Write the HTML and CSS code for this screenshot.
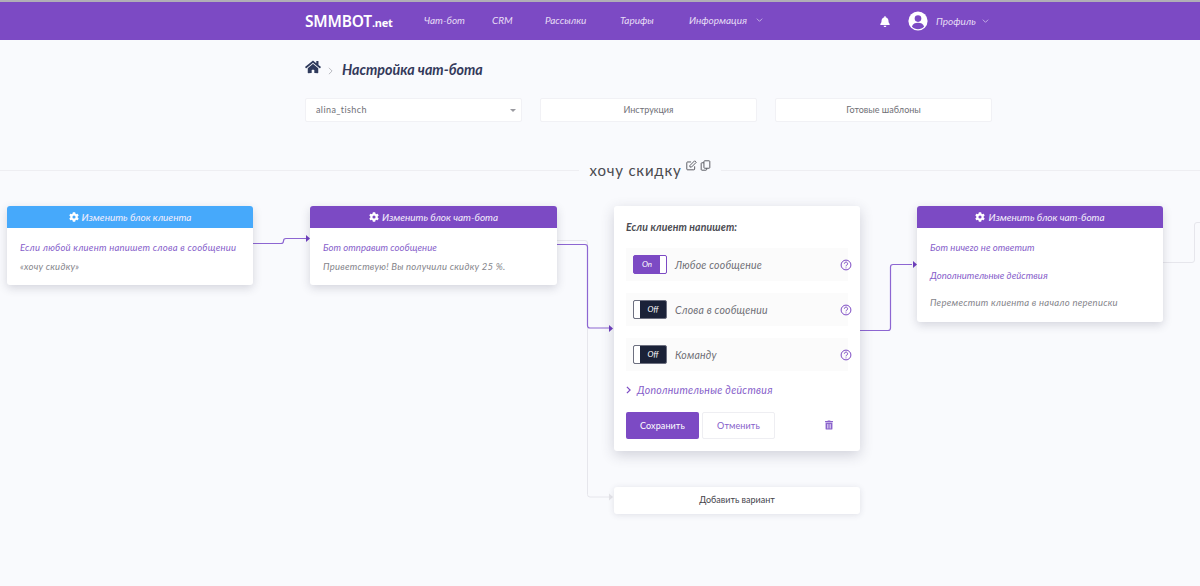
FILE: index.html
```html
<!DOCTYPE html>
<html>
<head>
    <title>SMMBOT.net</title>
    <link rel="stylesheet" href="styles.css">
</head>
<body>
    <header class="topbar">
        <div class="topbar-inner">
            <a class="logo">SMMBOT<span class="logo-net">.net</span></a>
            <nav class="nav">
                <a class="nav-chat">Чат-бот</a>
                <a class="nav-crm">CRM</a>
                <a class="nav-mail">Рассылки</a>
                <a class="nav-price">Тарифы</a>
                <a class="nav-info">Информация
                    <svg class="chev" viewBox="0 0 10 6"><path d="M1 1l4 4 4-4"/></svg>
                </a>
            </nav>
            <svg class="bell" viewBox="0 0 448 512"><path d="M224 512c35 0 64-29 64-64H160c0 35 29 64 64 64zm215-150c-19-21-55-52-55-154 0-78-54-140-128-155V32a32 32 0 0 0-64 0v21C118 68 64 130 64 208c0 102-36 133-55 154-6 6-9 14-9 22 0 16 13 32 32 32h384c19 0 32-16 32-32 0-8-3-16-9-22z"/></svg>
            <svg class="avatar" viewBox="0 0 20 20">
                <circle cx="10" cy="10" r="9.6" fill="#fff"/>
                <circle cx="10" cy="7.6" r="3.3" fill="#7c4ac4"/>
                <path d="M3.9 15.4c1-2.6 3.2-3.7 6.1-3.7s5.100 1.100 6.100 3.700c-1.500 1.700-3.700 2.800-6.100 2.800s-4.600-1.100-6.100-2.800z" fill="#7c4ac4"/>
            </svg>
            <a class="profile">Профиль
                <svg class="chev" viewBox="0 0 10 6"><path d="M1 1l4 4 4-4"/></svg>
            </a>
        </div>
    </header>

    <main class="page">
        <div class="crumbs">
            <svg class="home" viewBox="0 0 576 512"><path d="M280 148L96 300v164c0 9 7 16 16 16l112-.3c9 0 16-7 16-16V368c0-9 7-16 16-16h64c9 0 16 7 16 16v95.600c0 9 7 16 16 16l112 .4c9 0 16-7 16-16V300L296 148c-4-4-12-4-16 0zM572 251l-84-69V44c0-7-5-12-12-12h-56c-7 0-12 5-12 12v72l-90-74c-18-15-43-15-61 0L4 251c-5 4-6 12-2 17l26 31c4 5 12 6 17 2L280 107c4-4 12-4 16 0l235 194c5 4 13 3 17-2l26-31c4-5 3-13-2-17z"/></svg>
            <svg class="crumb-sep" viewBox="0 0 6 10"><path d="M1 1l4 4-4 4"/></svg>
            <h1>Настройка чат-бота</h1>
        </div>
        <div class="tools">
            <div class="tool tool-select">alina_tishch<span class="caret"></span></div>
            <div class="tool">Инструкция</div>
            <div class="tool">Готовые шаблоны</div>
        </div>
    </main>

    <div class="scenario">
        <span class="scenario-name">хочу скидку</span>
        <span class="scenario-icons">
            <svg viewBox="0 0 14 14"><path d="M11 8v3.500a1 1 0 0 1-1 1H2a1 1 0 0 1-1-1v-8a1 1 0 0 1 1-1h4.500"/><path d="M5 7l6-6 2 2-6 6H5z"/></svg>
            <svg viewBox="0 0 14 14"><rect x="5" y="1" width="7.500" height="9.500" rx="1"/><path d="M5 3.500H2.500a1 1 0 0 0-1 1v7.500a1 1 0 0 0 1 1h5a1 1 0 0 0 1-1v-1.500"/></svg>
        </span>
    </div>

    <section class="canvas">
        <!-- connectors between blocks, coordinates are the same as the canvas -->
        <svg class="links" viewBox="0 0 1200 586">
            <path class="link-idle" d="M557 240.500h28q2.500 0 2.500 2.500v251.500q0 2.500 2.500 2.500h19"/>
            <path class="link-idle" d="M1163 262.500h29q2.500 0 2.500-2.500v-35q0-2.500 2.500-2.500h3"/>
            <path class="link" d="M253 243.500h28q2.500 0 2.500-2.500t2.500-2.500h21"/>
            <path class="link" d="M557 244.500h28q2.500 0 2.500 2.500v78.500q0 2.500 2.500 2.500h19"/>
            <path class="link" d="M860 330.500h28q2.500 0 2.500-2.500v-61q0-2.500 2.500-2.500h19"/>
            <path class="arrow-idle" d="M609 493.500l4 3.500-4 3.500z"/>
            <path class="arrow" d="M306 235l4 3.500-4 3.500z"/>
            <path class="arrow" d="M609 325l4 3.500-4 3.500z"/>
            <path class="arrow" d="M913 261l4 3.500-4 3.500z"/>
        </svg>

        <article class="block block-client">
            <div class="block-head head-client">
                <svg class="gear" viewBox="0 0 512 512"><path d="M487 316l-42-25a190 190 0 0 0 0-70l42-25c5-3 7-8 5-14-11-35-30-67-54-93-4-4-10-5-15-2l-42 25a187 187 0 0 0-61-35V28c0-6-4-11-9-12a195 195 0 0 0-110 0c-5 1-9 6-9 12v49a189 189 0 0 0-61 35L89 88c-5-3-11-2-15 2-24 26-43 58-54 93-2 6 0 11 5 14l42 25a190 190 0 0 0 0 70l-42 25c-5 3-7 8-5 14 11 35 30 67 54 93 4 4 10 5 15 2l42-25a187 187 0 0 0 61 35v49c0 6 4 11 9 12a195 195 0 0 0 110 0c5-1 9-6 9-12v-49a189 189 0 0 0 61-35l42 25c5 3 11 2 15-2 24-26 43-58 54-93 2-6 0-11-5-14zM256 336a80 80 0 1 1 0-160 80 80 0 0 1 0 160z"/></svg>
                Изменить блок клиента
            </div>
            <div class="block-body">
                <p class="line-link">Если любой клиент напишет слова в сообщении</p>
                <p class="line-muted">«хочу скидку»</p>
            </div>
        </article>

        <article class="block block-send">
            <div class="block-head">
                <svg class="gear" viewBox="0 0 512 512"><path d="M487 316l-42-25a190 190 0 0 0 0-70l42-25c5-3 7-8 5-14-11-35-30-67-54-93-4-4-10-5-15-2l-42 25a187 187 0 0 0-61-35V28c0-6-4-11-9-12a195 195 0 0 0-110 0c-5 1-9 6-9 12v49a189 189 0 0 0-61 35L89 88c-5-3-11-2-15 2-24 26-43 58-54 93-2 6 0 11 5 14l42 25a190 190 0 0 0 0 70l-42 25c-5 3-7 8-5 14 11 35 30 67 54 93 4 4 10 5 15 2l42-25a187 187 0 0 0 61 35v49c0 6 4 11 9 12a195 195 0 0 0 110 0c5-1 9-6 9-12v-49a189 189 0 0 0 61-35l42 25c5 3 11 2 15-2 24-26 43-58 54-93 2-6 0-11-5-14zM256 336a80 80 0 1 1 0-160 80 80 0 0 1 0 160z"/></svg>
                Изменить блок чат-бота
            </div>
            <div class="block-body">
                <p class="line-link">Бот отправит сообщение</p>
                <p class="line-muted">Приветствую! Вы получили скидку 25 %.</p>
            </div>
        </article>

        <article class="block block-edit">
            <h2>Если клиент напишет:</h2>
            <div class="option">
                <span class="switch switch-on"><span class="switch-text">On</span><span class="knob"></span></span>
                <span class="option-name">Любое сообщение</span>
                <svg class="help" viewBox="0 0 12 12"><circle cx="6" cy="6" r="4.900"/><path d="M4.400 4.700a1.600 1.600 0 1 1 2.500 1.300c-.6.400-.9.700-.9 1.300"/><path d="M6 8.500v.8"/></svg>
            </div>
            <div class="option">
                <span class="switch"><span class="knob"></span><span class="switch-text">Off</span></span>
                <span class="option-name">Слова в сообщении</span>
                <svg class="help" viewBox="0 0 12 12"><circle cx="6" cy="6" r="4.900"/><path d="M4.400 4.700a1.600 1.600 0 1 1 2.500 1.300c-.6.400-.9.700-.9 1.300"/><path d="M6 8.500v.8"/></svg>
            </div>
            <div class="option">
                <span class="switch"><span class="knob"></span><span class="switch-text">Off</span></span>
                <span class="option-name">Команду</span>
                <svg class="help" viewBox="0 0 12 12"><circle cx="6" cy="6" r="4.900"/><path d="M4.400 4.700a1.600 1.600 0 1 1 2.500 1.300c-.6.400-.9.700-.9 1.300"/><path d="M6 8.500v.8"/></svg>
            </div>
            <a class="more">
                <svg viewBox="0 0 6 10"><path d="M1 1l4 4-4 4"/></svg>
                Дополнительные действия
            </a>
            <div class="actions">
                <button class="btn btn-save">Сохранить</button>
                <button class="btn btn-cancel">Отменить</button>
                <svg class="trash" viewBox="0 0 448 512"><path d="M32 464a48 48 0 0 0 48 48h288a48 48 0 0 0 48-48V128H32zm272-256a16 16 0 0 1 32 0v224a16 16 0 0 1-32 0zm-96 0a16 16 0 0 1 32 0v224a16 16 0 0 1-32 0zm-96 0a16 16 0 0 1 32 0v224a16 16 0 0 1-32 0zM432 32H312l-9-19a24 24 0 0 0-22-13H167a24 24 0 0 0-21 13l-9 19H16A16 16 0 0 0 0 48v32a16 16 0 0 0 16 16h416a16 16 0 0 0 16-16V48a16 16 0 0 0-16-16z"/></svg>
            </div>
        </article>

        <article class="block block-add">Добавить вариант</article>

        <article class="block block-none">
            <div class="block-head">
                <svg class="gear" viewBox="0 0 512 512"><path d="M487 316l-42-25a190 190 0 0 0 0-70l42-25c5-3 7-8 5-14-11-35-30-67-54-93-4-4-10-5-15-2l-42 25a187 187 0 0 0-61-35V28c0-6-4-11-9-12a195 195 0 0 0-110 0c-5 1-9 6-9 12v49a189 189 0 0 0-61 35L89 88c-5-3-11-2-15 2-24 26-43 58-54 93-2 6 0 11 5 14l42 25a190 190 0 0 0 0 70l-42 25c-5 3-7 8-5 14 11 35 30 67 54 93 4 4 10 5 15 2l42-25a187 187 0 0 0 61 35v49c0 6 4 11 9 12a195 195 0 0 0 110 0c5-1 9-6 9-12v-49a189 189 0 0 0 61-35l42 25c5 3 11 2 15-2 24-26 43-58 54-93 2-6 0-11-5-14zM256 336a80 80 0 1 1 0-160 80 80 0 0 1 0 160z"/></svg>
                Изменить блок чат-бота
            </div>
            <div class="block-body body-tall">
                <p class="line-link">Бот ничего не ответит</p>
                <p class="line-link">Дополнительные действия</p>
                <p class="line-muted">Переместит клиента в начало переписки</p>
            </div>
        </article>
    </section>
</body>
</html>
```

FILE: styles.css
```css
:root {
    --purple: #7c4ac4;
    --blue: #46a9fb;
    --bg: #f9fafd;
    --dark: #1b2238;
    --text: #6f6f76;
    --line: #eeeef2;
}
html, body { height: 100%; }
body { margin: 0; background: var(--bg); color: var(--text); font-family: 'Lato', 'Noto Sans', sans-serif; font-size: 9.500px; font-style: italic; overflow: hidden; }
p, h1, h2 { margin: 0; white-space: nowrap; }
a { display: block; }
svg { display: block; flex: none; }

.topbar { height: 38px; background: var(--purple); border-top: 2px solid #b0aeb6; color: #e6dcf5; font-size: 10px; }
.topbar-inner { height: 100%; margin-left: 305px; width: 690px; display: flex; align-items: center; }
.logo { color: #fff; font-family: 'Noto Sans', sans-serif; font-size: 15.500px; font-weight: 600; font-style: normal; width: 119px; letter-spacing: -0.2px; }
.logo-net { font-size: 11px; font-weight: 700; }
.nav { display: flex; align-items: center; width: 456px; margin-top: -2px; }
.nav a { display: flex; align-items: center; }
.nav-chat { width: 68px; }
.nav-crm { width: 53px; }
.nav-mail { width: 75px; }
.nav-price { width: 69px; }
.chev { width: 7px; height: 4px; fill: none; stroke: #e6dcf5; stroke-width: 1; margin-left: 9px; }
.bell { width: 10px; height: 11px; fill: #fff; margin-right: 18px; }
.avatar { width: 20px; height: 20px; margin-right: 8px; }
.profile { display: flex; align-items: center; }
.profile .chev { margin-left: 6px; }

.page { margin-left: 305px; width: 687px; }
.crumbs { display: flex; align-items: center; height: 32px; margin-top: 13px; }
.home { width: 16px; height: 14px; fill: #2f3a5c; margin-top: -4px; }
.crumb-sep { width: 5px; height: 8px; fill: none; stroke: #a9abb3; stroke-width: 1; margin: 3px 9px 0 7px; }
h1 { font-size: 14.300px; font-weight: 700; color: #33395a; }
.tools { display: flex; justify-content: space-between; margin-top: 13px; }
.tool { width: 217px; height: 24px; box-sizing: border-box; line-height: 22px; background: #fff; border: 1px solid #f1f1f5; border-radius: 2px; text-align: center; font-size: 9px; font-style: normal; position: relative; }
.tool-select { text-align: left; padding-left: 10px; letter-spacing: 0.4px; }
.caret { position: absolute; right: 5px; top: 10px; border: 3px solid transparent; border-top-color: #9a9aa0; border-bottom: 0; }

.scenario { display: flex; align-items: flex-start; justify-content: center; height: 24px; margin-top: 36px; padding-left: 100px; position: relative; }
.scenario::before { content: ""; position: absolute; left: 0; right: 0; top: 12px; height: 1px; background: var(--line); }
.scenario-name { position: relative; z-index: 1; background: var(--bg); padding: 0 0 0 10px; font-size: 15px; line-height: 24px; font-style: normal; letter-spacing: 0.8px; color: #4a4a50; }
.scenario-icons { position: relative; z-index: 1; background: var(--bg); display: flex; gap: 3px; padding: 2px 10px 0 4px; height: 22px; }
.scenario-icons svg { width: 11px; height: 11px; fill: none; stroke: #55565e; stroke-width: 1.200; }

.canvas { position: absolute; left: 0; top: 0; width: 1200px; height: 586px; }
.links { position: absolute; left: 0; top: 0; width: 1200px; height: 586px; }
.link { fill: none; stroke: #8d66d2; stroke-width: 1.200; }
.link-idle { fill: none; stroke: #e6e6ec; stroke-width: 1; }
.arrow { fill: #6f3fc0; }
.arrow-idle { fill: #e3e3e8; }

/* blocks sit on the free canvas */
.block { position: absolute; top: 206px; width: 246px; box-sizing: border-box; background: #fff; border-radius: 3px; box-shadow: 0 3px 10px #2b2b4a2e; }
.block-client { left: 7px; height: 79px; }
.block-send { left: 310px; width: 247px; height: 79px; }
.block-none { left: 917px; height: 116px; }
.block-edit { left: 614px; height: 245px; padding: 14px 12px 0; box-shadow: 0 4px 14px #2b2b4a33; }
.block-add { left: 614px; top: 487px; height: 27px; line-height: 26px; text-align: center; font-size: 9px; font-style: normal; color: #44444c; box-shadow: 0 1px 6px #2b2b4a1f; }

.block-head { height: 22px; display: flex; align-items: center; justify-content: center; gap: 3px; background: var(--purple); color: #f3eefb; font-size: 10px; border-radius: 3px 3px 0 0; }
.head-client { background: var(--blue); }
.gear { width: 10px; height: 10px; fill: #fff; }
.block-body { padding: 13px 13px 0; display: flex; flex-direction: column; gap: 5px; line-height: 14px; }
.body-tall { gap: 13.500px; }
.line-link { color: #8660ca; letter-spacing: 0.05px; }
.block-client .line-link { letter-spacing: 0.25px; }
.line-muted { color: #85858b; letter-spacing: 0.25px; }

h2 { font-size: 10.500px; font-weight: 700; color: #4b4b52; line-height: 14px; letter-spacing: 0.1px; margin-bottom: 14px; }
.option { height: 33px; display: flex; align-items: center; background: #fbfbfb; padding-left: 7px; margin-bottom: 12px; position: relative; }
.switch { width: 34px; height: 19px; box-sizing: border-box; display: flex; align-items: stretch; background: var(--dark); border: 1px solid #6d7080; border-radius: 2px; color: #fff; font-size: 8px; overflow: hidden; }
.switch-on { background: var(--purple); border-color: var(--purple); }
.switch-text { flex: 1; line-height: 16px; text-align: center; }
.knob { width: 6px; background: #fff; }
.option-name { margin-left: 8px; font-size: 10.500px; letter-spacing: 0.2px; }
.help { position: absolute; right: -4px; top: 11px; width: 12px; height: 12px; fill: none; stroke: var(--purple); stroke-width: 1; }
.more { display: flex; align-items: center; gap: 6px; color: #8660ca; font-size: 10.500px; letter-spacing: 0.3px; line-height: 14px; }
.more svg { width: 5px; height: 8px; fill: none; stroke: var(--purple); stroke-width: 1.500; }
.actions { display: flex; align-items: center; gap: 3px; margin-top: 15px; position: relative; }
.btn { width: 73px; height: 27px; padding: 0; font-family: inherit; font-size: 9px; letter-spacing: 0.1px; border-radius: 2px; }
.btn-save { background: var(--purple); color: #fff; border: none; }
.btn-cancel { background: #fff; color: #8660ca; border: 1px solid #eeeef2; }
.trash { position: absolute; right: 15px; top: 8px; width: 8px; height: 10px; fill: #8a62cc; }
```
